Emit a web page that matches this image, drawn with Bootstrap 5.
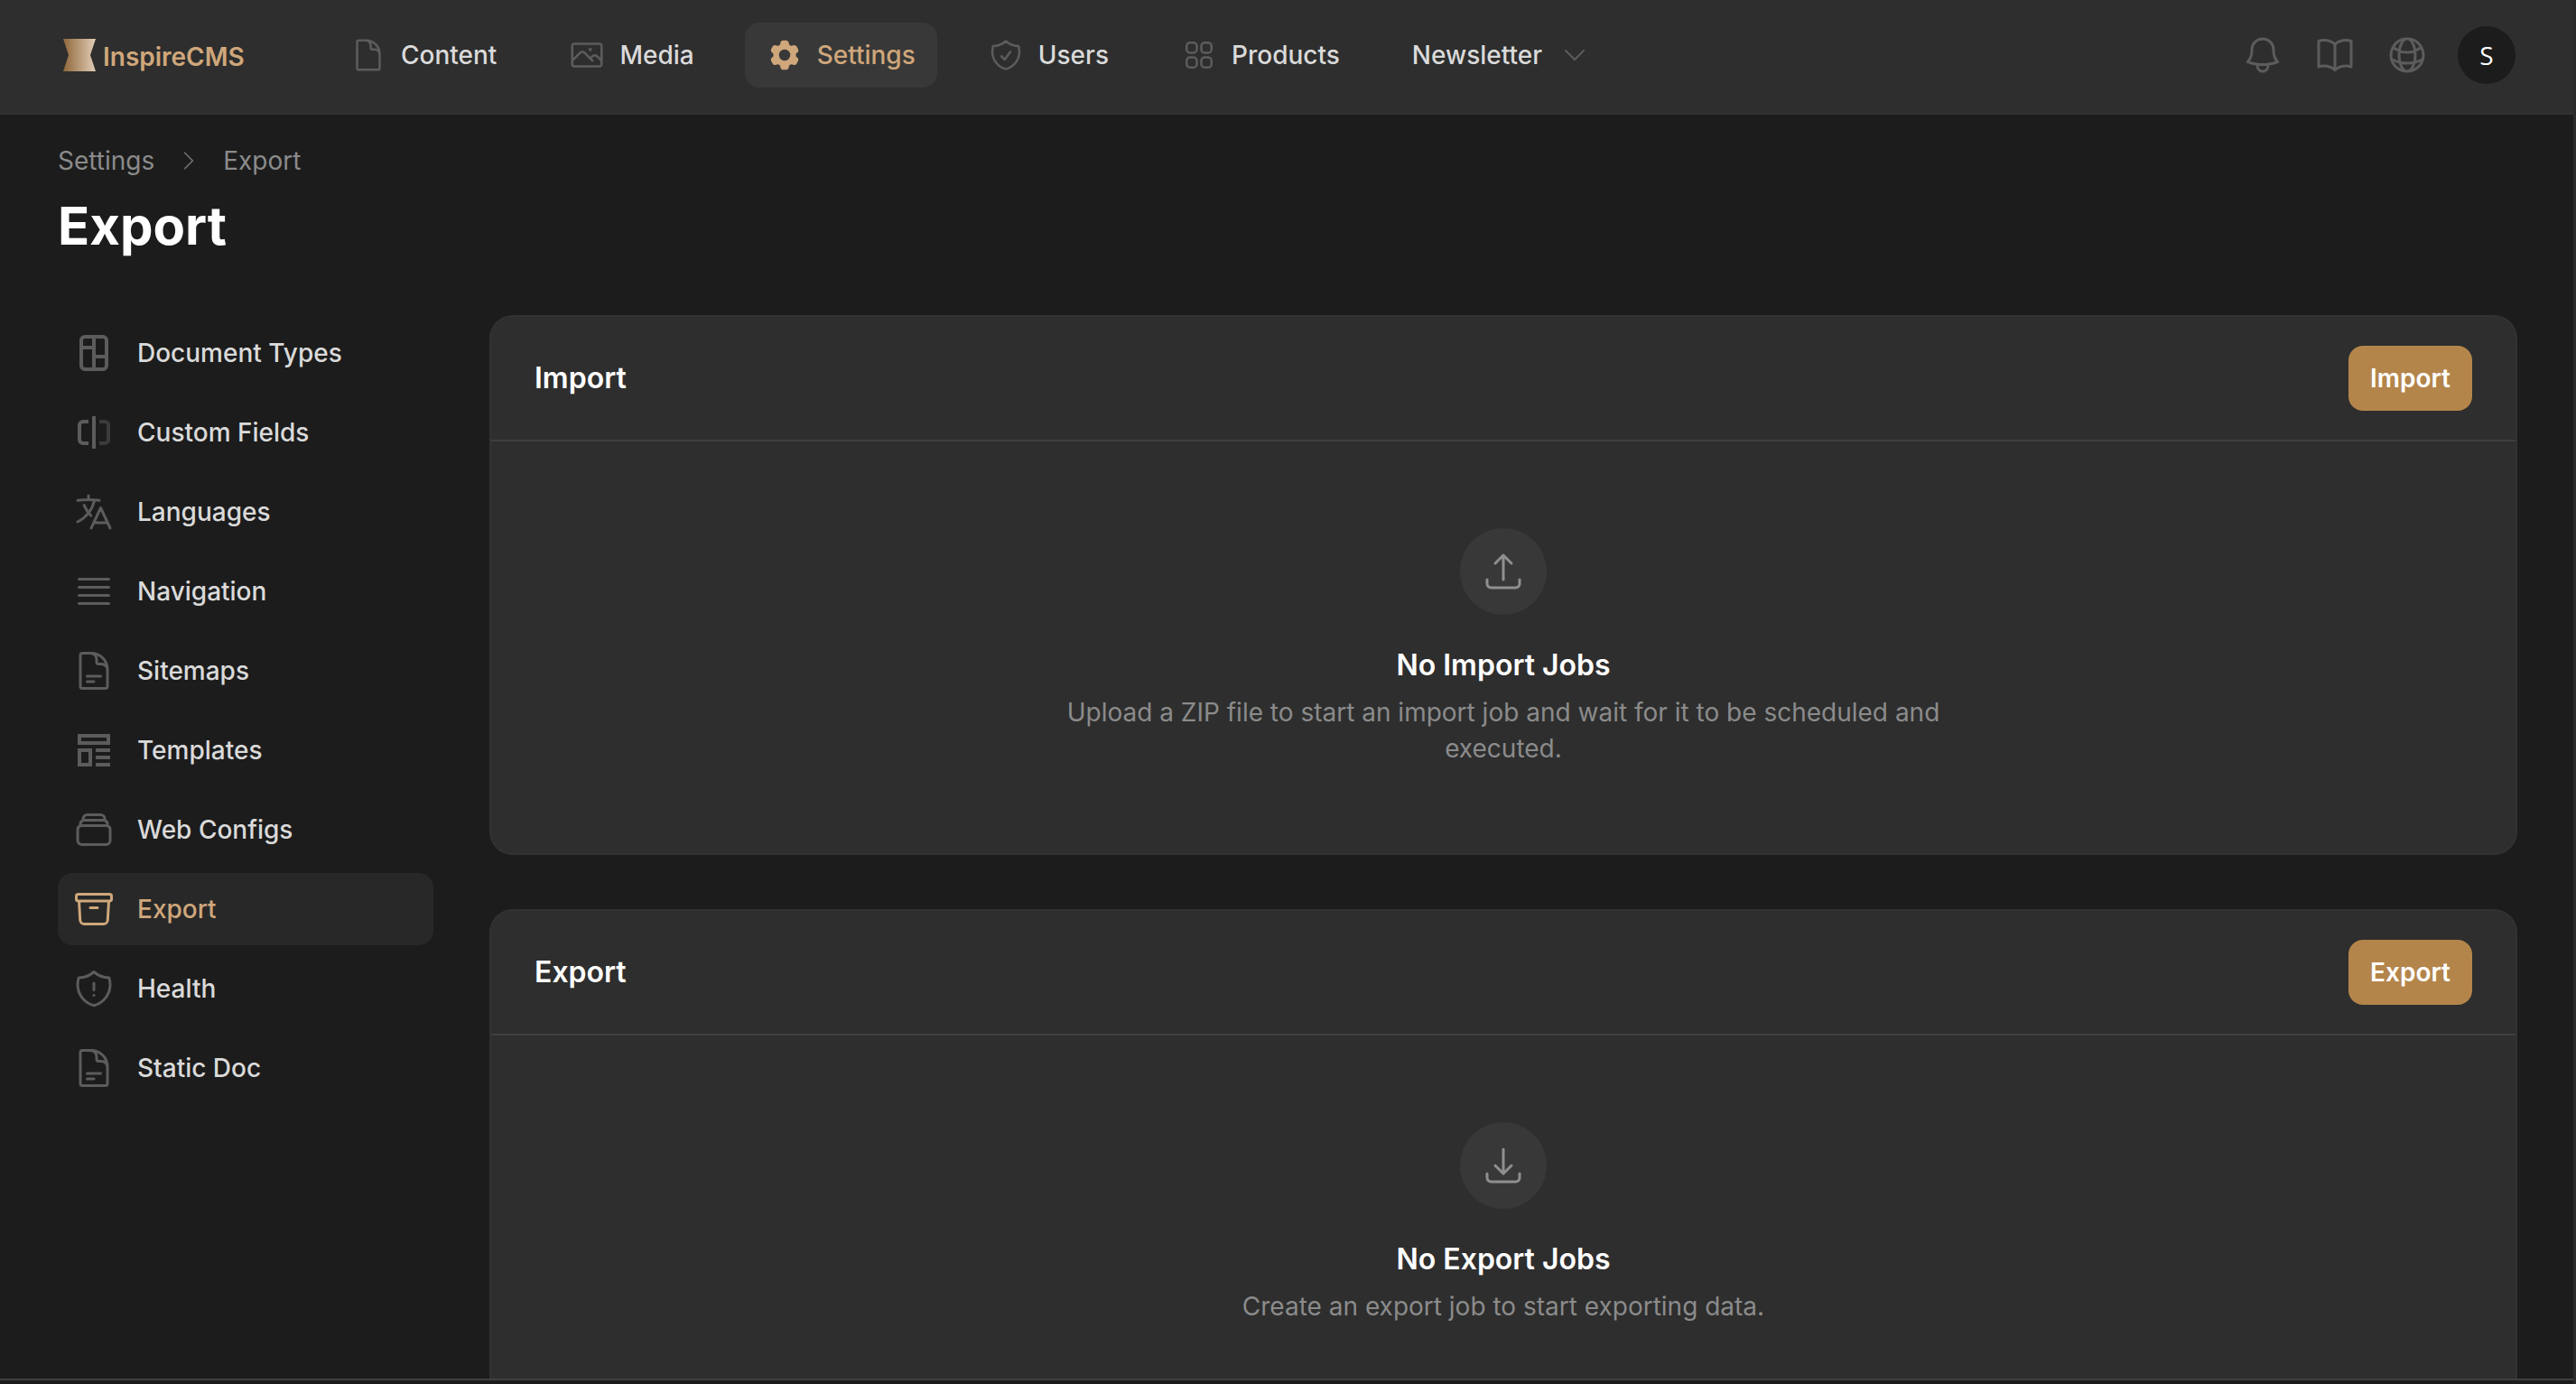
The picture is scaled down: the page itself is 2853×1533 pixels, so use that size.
<!DOCTYPE html>
<html lang="en">
<head>
<meta charset="utf-8">
<meta name="viewport" content="width=device-width, initial-scale=1">
<title>Export - InspireCMS</title>
<link href="https://cdn.jsdelivr.net/npm/bootstrap@5.3.0/dist/css/bootstrap.min.css" rel="stylesheet">
<style>
  :root {
    --ink: #1c1c1c;
    --panel: #2e2e2e;
    --panel-edge: #323232;
    --line: #404040;
    --icon: #5c5c5c;
    --soft: #8b8b8b;
    --text: #dadada;
    --tan: #cfa77b;
    --bronze: #b4854b;
  }
  body {
    background: var(--ink);
    color: var(--text);
    font-family: Inter, "Liberation Sans", sans-serif;
    font-size: 28px;
    line-height: 40px;
  }
  a { text-decoration: none; }
  .app-shell { height: 100vh; border-right: 3px solid #2b2b2b; }
  .app-scroll { min-height: 0; border-bottom: 2px solid var(--line); }
  .app-foot { height: 4px; }
  .ico { width: 48px; height: 48px; flex: none; fill: none; stroke: currentColor; stroke-width: 1.5; stroke-linecap: round; stroke-linejoin: round; }
  .ico-nav { width: 40px; height: 40px; }
  .ico-sm { width: 28px; height: 28px; }

  .topbar { background: var(--panel); border-bottom: 2px solid var(--panel-edge); padding: 25px 64px 28px; }
  .brand { width: 300px; padding-left: 6px; gap: 8px; color: var(--tan); font-weight: 600; }
  .brand:hover { color: var(--tan); }
  .brand span { padding-top: 4px; }
  .brand svg { width: 36px; height: 36px; }
  .main-nav { gap: 32px; }
  .main-nav .nav-link { gap: 16px; padding: 16px 24px; border-radius: 16px; color: var(--text); font-weight: 500; }
  .main-nav .ico, .side-nav .ico { color: var(--icon); }
  .main-nav .nav-link.active { background: #383838; color: var(--tan); }
  .main-nav .active .ico, .side-nav .active .ico { color: var(--tan); }
  .tools { gap: 32px; }
  .tools .btn { color: var(--icon); border: 0; padding: 0; line-height: 0; }
  .tools .avatar { width: 64px; height: 64px; background: var(--ink); color: #fff; font: 400 28px/64px "Open Sans", sans-serif; }

  .page { padding: 31px 64px 0; }
  .crumbs { gap: 24px; }
  .crumbs a, .crumbs span { color: var(--soft); }
  .crumbs .ico { color: #707070; }
  .page-title { font-size: 58px; line-height: 72px; font-weight: 700; color: #fff; margin: 16px 0 65px; }
  .columns { gap: 64px; }
  .side-nav { width: 416px; flex: none; gap: 8px; }
  .side-nav .nav-link { gap: 24px; padding: 16px; height: 80px; border-radius: 16px; color: var(--text); font-weight: 500; }
  .side-nav .nav-link.active { background: #282828; color: var(--tan); }

  .jobs { gap: 64px; min-width: 0; }
  .job-card { background: var(--panel); border-radius: 24px; box-shadow: 0 0 0 2px var(--panel-edge); }
  .job-head { padding: 32px 48px; border-bottom: 2px solid var(--line); }
  .job-head h2, .job-empty h3 { font-size: 32px; line-height: 48px; font-weight: 600; color: #fff; margin: 0; }
  .btn-bronze { --bs-btn-bg: var(--bronze); --bs-btn-color: #fff; --bs-btn-hover-bg: #c39459; --bs-btn-hover-color: #fff; border: 0; padding: 16px 24px; border-radius: 16px; font-size: 28px; line-height: 40px; font-weight: 600; }
  .job-empty { padding: 96px 48px; }
  .job-disc { width: 96px; height: 96px; background: #383838; color: #8f8f8f; margin-bottom: 32px; }
  .job-empty p { max-width: 984px; margin: 8px 0 0; color: var(--soft); }
</style>
<script src="https://cdn.jsdelivr.net/npm/bootstrap@5.3.0/dist/js/bootstrap.bundle.min.js" defer></script>
</head>
<body>
<div class="app-shell d-flex flex-column">
  <div class="app-scroll flex-grow-1 overflow-hidden">
    <header class="topbar d-flex align-items-center">
      <a class="brand d-flex align-items-center flex-shrink-0" href="#">
        <svg viewBox="0 0 36 36" aria-hidden="true">
          <defs><linearGradient id="brandFill"><stop offset="0" stop-color="#8f673a"/><stop offset="1" stop-color="#e2cdb7"/></linearGradient></defs>
          <path fill="url(#brandFill)" d="M0 0h36q-6 18-6 18 0 0 6 18H0q6-18 6-18 0 0-6-18Z"/>
        </svg>
        <span>InspireCMS</span>
      </a>
      <nav class="nav main-nav flex-nowrap" aria-label="Main">
        <a class="nav-link d-flex align-items-center" href="#">
          <svg class="ico ico-nav" viewBox="0 0 24 24"><path d="M19.5 14.25v-2.625a3.375 3.375 0 0 0-3.375-3.375h-1.5A1.125 1.125 0 0 1 13.5 7.125v-1.5a3.375 3.375 0 0 0-3.375-3.375H8.25m2.25 0H5.625c-.621 0-1.125.504-1.125 1.125v17.25c0 .621.504 1.125 1.125 1.125h12.75c.621 0 1.125-.504 1.125-1.125V11.25a9 9 0 0 0-9-9Z"/></svg>
          Content
        </a>
        <a class="nav-link d-flex align-items-center" href="#">
          <svg class="ico ico-nav" viewBox="0 0 24 24"><path d="m2.25 15.75 5.159-5.159a2.25 2.25 0 0 1 3.182 0l5.159 5.159m-1.5-1.5 1.409-1.409a2.25 2.25 0 0 1 3.182 0l2.909 2.909m-18 3.75h16.5a1.5 1.5 0 0 0 1.5-1.5V6a1.5 1.5 0 0 0-1.5-1.5H3.75A1.5 1.5 0 0 0 2.25 6v12a1.5 1.5 0 0 0 1.5 1.5Zm10.5-11.25h.008v.008h-.008V8.25Zm.375 0a.375.375 0 1 1-.75 0 .375.375 0 0 1 .75 0Z"/></svg>
          Media
        </a>
        <a class="nav-link active d-flex align-items-center" aria-current="page" href="#">
          <svg class="ico ico-nav" viewBox="0 0 24 24"><path fill="currentColor" stroke="none" fill-rule="evenodd" d="M11.078 2.25c-.917 0-1.699.663-1.85 1.567L9.05 4.889c-.02.12-.115.26-.297.348a7.493 7.493 0 0 0-.986.57c-.166.115-.334.126-.45.083L6.3 5.508a1.875 1.875 0 0 0-2.282.819l-.922 1.597a1.875 1.875 0 0 0 .432 2.385l.84.692c.095.078.17.229.154.43a7.598 7.598 0 0 0 0 1.139c.015.2-.059.352-.153.43l-.841.692a1.875 1.875 0 0 0-.432 2.385l.922 1.597a1.875 1.875 0 0 0 2.282.818l1.019-.382c.115-.043.283-.031.45.082.312.214.641.405.985.57.182.088.277.228.297.35l.178 1.071c.151.904.933 1.567 1.85 1.567h1.844c.916 0 1.699-.663 1.85-1.567l.178-1.072c.02-.12.114-.26.297-.349.344-.165.673-.356.985-.57.167-.114.335-.125.45-.082l1.02.382a1.875 1.875 0 0 0 2.28-.819l.923-1.597a1.875 1.875 0 0 0-.432-2.385l-.84-.692c-.095-.078-.17-.229-.154-.43a7.614 7.614 0 0 0 0-1.139c-.016-.2.059-.352.153-.43l.84-.692c.708-.582.891-1.59.433-2.385l-.922-1.597a1.875 1.875 0 0 0-2.282-.818l-1.02.382c-.114.043-.282.031-.449-.083a7.49 7.49 0 0 0-.985-.57c-.183-.087-.277-.227-.297-.348l-.179-1.072a1.875 1.875 0 0 0-1.85-1.567h-1.843ZM12 15.75a3.75 3.75 0 1 0 0-7.5 3.75 3.75 0 0 0 0 7.5Z"/></svg>
          Settings
        </a>
        <a class="nav-link d-flex align-items-center" href="#">
          <svg class="ico ico-nav" viewBox="0 0 24 24"><path d="M9 12.75 11.25 15 15 9.75m-3-7.036A11.959 11.959 0 0 1 3.598 6 11.99 11.99 0 0 0 3 9.749c0 5.592 3.824 10.29 9 11.623 5.176-1.332 9-6.03 9-11.622 0-1.31-.21-2.571-.598-3.751h-.152c-3.196 0-6.1-1.248-8.25-3.285Z"/></svg>
          Users
        </a>
        <a class="nav-link d-flex align-items-center" href="#">
          <svg class="ico ico-nav" viewBox="0 0 24 24"><rect x="3.75" y="3.75" width="6.75" height="6.75" rx="2.25"/><rect x="13.5" y="3.75" width="6.75" height="6.75" rx="2.25"/><rect x="3.75" y="13.5" width="6.75" height="6.75" rx="2.25"/><rect x="13.5" y="13.5" width="6.75" height="6.75" rx="2.25"/></svg>
          Products
        </a>
        <a class="nav-link d-flex align-items-center" role="button" href="#">
          Newsletter
          <svg class="ico ico-nav" viewBox="-3 -3 30 30"><path d="m19.5 8.25-7.5 7.5-7.5-7.5"/></svg>
        </a>
      </nav>
      <div class="tools d-flex align-items-center ms-auto">
        <button class="btn" type="button" aria-label="Notifications">
          <svg class="ico" viewBox="0 0 24 24"><path d="M14.857 17.082a23.848 23.848 0 0 0 5.454-1.31A8.967 8.967 0 0 1 18 9.75V9A6 6 0 0 0 6 9v.75a8.967 8.967 0 0 1-2.312 6.022c1.733.64 3.56 1.085 5.455 1.31m5.714 0a24.255 24.255 0 0 1-5.714 0m5.714 0a3 3 0 1 1-5.714 0"/></svg>
        </button>
        <button class="btn" type="button" aria-label="Documentation">
          <svg class="ico" viewBox="0 0 24 24"><path d="M12 6.042A8.967 8.967 0 0 0 6 3.75c-1.052 0-2.062.18-3 .512v14.25A8.987 8.987 0 0 1 6 18c2.305 0 4.408.867 6 2.292m0-14.25a8.966 8.966 0 0 1 6-2.292c1.052 0 2.062.18 3 .512v14.25A8.987 8.987 0 0 0 18 18a8.967 8.967 0 0 0-6 2.292m0-14.25v14.25"/></svg>
        </button>
        <button class="btn" type="button" aria-label="Language">
          <svg class="ico" viewBox="0 0 24 24"><path d="M12 21a9.004 9.004 0 0 0 8.716-6.747M12 21a9.004 9.004 0 0 1-8.716-6.747M12 21c2.485 0 4.5-4.03 4.5-9S14.485 3 12 3m0 18c-2.485 0-4.5-4.03-4.5-9S9.515 3 12 3m0 0a8.997 8.997 0 0 1 7.843 4.582M12 3a8.997 8.997 0 0 0-7.843 4.582m15.686 0A11.953 11.953 0 0 1 12 10.5c-2.998 0-5.74-1.1-7.843-2.918m15.686 0A8.959 8.959 0 0 1 21 12c0 .778-.099 1.533-.284 2.253m0 0A17.919 17.919 0 0 1 12 16.5c-3.162 0-6.133-.815-8.716-2.247m0 0A9.015 9.015 0 0 1 3 12c0-1.605.42-3.113 1.157-4.418"/></svg>
        </button>
        <button class="btn avatar rounded-circle" type="button">S</button>
      </div>
    </header>

    <main class="page">
      <nav class="crumbs d-flex align-items-center" aria-label="Breadcrumb">
        <a href="#">Settings</a>
        <svg class="ico ico-sm" viewBox="0 0 24 24" aria-hidden="true"><path d="m8.25 4.5 7.5 7.5-7.5 7.5"/></svg>
        <span aria-current="page">Export</span>
      </nav>
      <h1 class="page-title">Export</h1>

      <div class="columns d-flex align-items-start">
        <nav class="nav side-nav flex-column flex-nowrap" aria-label="Settings">
          <a class="nav-link d-flex align-items-center" href="#">
            <svg class="ico" viewBox="0 0 48 48"><g style="stroke-width:4;stroke-linecap:butt"><rect x="10" y="6" width="28" height="36" rx="4"/><path d="M24 6v36M10 18h14M24 28h14"/></g></svg>
            Document Types
          </a>
          <a class="nav-link d-flex align-items-center" href="#">
            <svg class="ico" viewBox="0 0 48 48"><g style="stroke-width:4;stroke-linecap:butt"><path d="M18 12h-6a4 4 0 0 0-4 4v16a4 4 0 0 0 4 4h6M24 6v36"/><path stroke="#3b3b3b" d="M30 12h6a4 4 0 0 1 4 4v16a4 4 0 0 1-4 4h-6"/></g></svg>
            Custom Fields
          </a>
          <a class="nav-link d-flex align-items-center" href="#">
            <svg class="ico" viewBox="0 0 24 24"><path d="m10.5 21 5.25-11.25L21 21m-9-3h7.5M3 5.621a48.474 48.474 0 0 1 6-.371m0 0c1.12 0 2.233.038 3.334.114M9 5.25V3m3.334 2.364C11.176 10.658 7.69 15.08 3 17.502m9.334-12.138c.896.061 1.785.147 2.666.257m-4.589 8.495a18.023 18.023 0 0 1-3.827-5.802"/></svg>
            Languages
          </a>
          <a class="nav-link d-flex align-items-center" href="#">
            <svg class="ico" viewBox="0 0 24 24"><path d="M3.75 5.25h16.5m-16.5 4.5h16.5m-16.5 4.5h16.5m-16.5 4.5h16.5"/></svg>
            Navigation
          </a>
          <a class="nav-link d-flex align-items-center" href="#">
            <svg class="ico" viewBox="0 0 24 24"><path d="M19.5 14.25v-2.625a3.375 3.375 0 0 0-3.375-3.375h-1.5A1.125 1.125 0 0 1 13.5 7.125v-1.5a3.375 3.375 0 0 0-3.375-3.375H8.25m0 12.75h7.5m-7.5 3H12M10.5 2.25H5.625c-.621 0-1.125.504-1.125 1.125v17.25c0 .621.504 1.125 1.125 1.125h12.75c.621 0 1.125-.504 1.125-1.125V11.25a9 9 0 0 0-9-9Z"/></svg>
            Sitemaps
          </a>
          <a class="nav-link d-flex align-items-center" href="#">
            <svg class="ico" viewBox="0 0 48 48"><g style="stroke-width:4;stroke-linecap:butt;stroke-linejoin:miter"><path d="M8 8h32v8H8zM8 24h12v16H8zM26 24h16M26 32h16M26 40h16"/></g></svg>
            Templates
          </a>
          <a class="nav-link d-flex align-items-center" href="#">
            <svg class="ico" viewBox="0 0 24 24"><path d="M6 6.878V6a2.25 2.25 0 0 1 2.25-2.25h7.5A2.25 2.25 0 0 1 18 6v.878m-12 0c.235-.083.487-.128.75-.128h10.5c.263 0 .515.045.75.128m-12 0A2.25 2.25 0 0 0 4.5 9v.878m13.5-3A2.25 2.25 0 0 1 19.5 9v.878m0 0a2.246 2.246 0 0 0-.75-.128H5.25c-.263 0-.515.045-.75.128m15 0A2.25 2.25 0 0 1 21 12v6a2.25 2.25 0 0 1-2.25 2.25H5.25A2.25 2.25 0 0 1 3 18v-6c0-.98.626-1.813 1.5-2.122"/></svg>
            Web Configs
          </a>
          <a class="nav-link active d-flex align-items-center" aria-current="page" href="#">
            <svg class="ico" viewBox="0 0 24 24"><path d="m20.25 7.5-.625 10.632a2.25 2.25 0 0 1-2.247 2.118H6.622a2.25 2.25 0 0 1-2.247-2.118L3.75 7.5M10 11.25h4M3.375 7.5h17.25c.621 0 1.125-.504 1.125-1.125v-1.5c0-.621-.504-1.125-1.125-1.125H3.375c-.621 0-1.125.504-1.125 1.125v1.5c0 .621.504 1.125 1.125 1.125Z"/></svg>
            Export
          </a>
          <a class="nav-link d-flex align-items-center" href="#">
            <svg class="ico" viewBox="0 0 24 24"><path d="M12 9v3.75m0-10.036A11.959 11.959 0 0 1 3.598 6 11.99 11.99 0 0 0 3 9.75c0 5.592 3.824 10.29 9 11.622 5.176-1.332 9-6.03 9-11.622 0-1.31-.21-2.57-.598-3.75h-.152c-3.196 0-6.1-1.25-8.25-3.286Zm0 13.036h.008v.008H12v-.008Z"/></svg>
            Health
          </a>
          <a class="nav-link d-flex align-items-center" href="#">
            <svg class="ico" viewBox="0 0 24 24"><path d="M19.5 14.25v-2.625a3.375 3.375 0 0 0-3.375-3.375h-1.5A1.125 1.125 0 0 1 13.5 7.125v-1.5a3.375 3.375 0 0 0-3.375-3.375H8.25m0 12.75h7.5m-7.5 3H12M10.5 2.25H5.625c-.621 0-1.125.504-1.125 1.125v17.25c0 .621.504 1.125 1.125 1.125h12.75c.621 0 1.125-.504 1.125-1.125V11.25a9 9 0 0 0-9-9Z"/></svg>
            Static Doc
          </a>
        </nav>

        <div class="jobs d-flex flex-column flex-grow-1">
          <section class="job-card">
            <div class="job-head d-flex align-items-center justify-content-between">
              <h2>Import</h2>
              <button class="btn btn-bronze" type="button">Import</button>
            </div>
            <div class="job-empty d-flex flex-column align-items-center text-center">
              <div class="job-disc rounded-circle d-flex align-items-center justify-content-center">
                <svg class="ico" viewBox="0 0 24 24"><path d="M3 16.5v2.25A2.25 2.25 0 0 0 5.25 21h13.5A2.25 2.25 0 0 0 21 18.75V16.5m-13.5-9L12 3m0 0 4.5 4.5M12 3v13.5"/></svg>
              </div>
              <h3>No Import Jobs</h3>
              <p>Upload a ZIP file to start an import job and wait for it to be scheduled and executed.</p>
            </div>
          </section>
          <section class="job-card">
            <div class="job-head d-flex align-items-center justify-content-between">
              <h2>Export</h2>
              <button class="btn btn-bronze" type="button">Export</button>
            </div>
            <div class="job-empty d-flex flex-column align-items-center text-center">
              <div class="job-disc rounded-circle d-flex align-items-center justify-content-center">
                <svg class="ico" viewBox="0 0 24 24"><path d="M3 16.5v2.25A2.25 2.25 0 0 0 5.25 21h13.5A2.25 2.25 0 0 0 21 18.75V16.5M16.5 12 12 16.5m0 0L7.5 12m4.5 4.5V3"/></svg>
              </div>
              <h3>No Export Jobs</h3>
              <p>Create an export job to start exporting data.</p>
            </div>
          </section>
        </div>
      </div>
    </main>
  </div>
  <div class="app-foot"></div>
</div>
</body>
</html>
